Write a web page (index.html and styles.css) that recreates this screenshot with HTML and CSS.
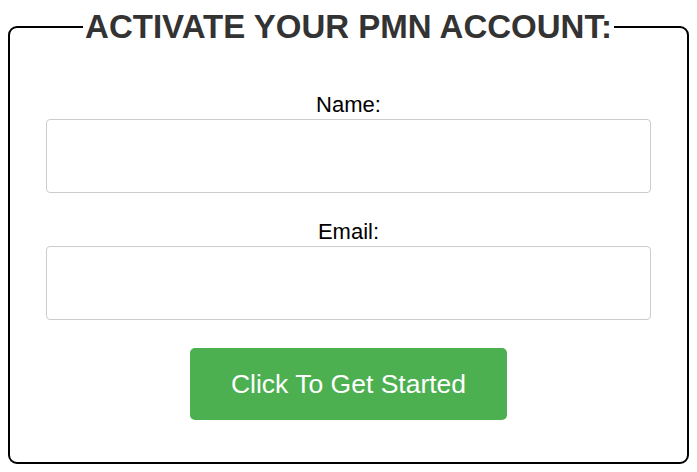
FILE: index.html
```html
<!DOCTYPE html>
<html>
<head>
  <title>Activate Your PMN Account</title>
  <link rel="stylesheet" href="styles.css">
</head>
<body>
  <form class="activate-form" onsubmit="return false;">
    <fieldset>
      <legend>ACTIVATE YOUR PMN ACCOUNT:</legend>

      <div class="form-group">
        <label for="name">Name:</label>
        <input type="text" id="name">
      </div>

      <div class="form-group">
        <label for="email">Email:</label>
        <input type="email" id="email">
      </div>

      <button type="submit">Click To Get Started</button>
    </fieldset>
  </form>
</body>
</html>
```

FILE: styles.css
```css
body { font-family: "Liberation Sans", Arial, sans-serif; margin: 8px; }
fieldset { border: 2px solid #000; border-radius: 9px; padding: 46px 36px 42px; margin: 0; text-align: center; }
legend { margin: 0 auto; padding: 0 2px; font-size: 33px; font-weight: bold; color: #333; }
.form-group { margin-bottom: 26px; }
label { display: block; font-size: 22px; color: #000; margin-bottom: 1px; }
input { display: block; width: 100%; height: 74px; box-sizing: border-box; border: 1px solid #ccc; border-radius: 4px; padding: 8px; font-size: 20px; }
button { display: block; margin: 28px auto 0; width: 317px; height: 72px; background: #4CAF50; color: white; border: none; border-radius: 5px; font-family: inherit; font-size: 26.5px; cursor: pointer; }
```
